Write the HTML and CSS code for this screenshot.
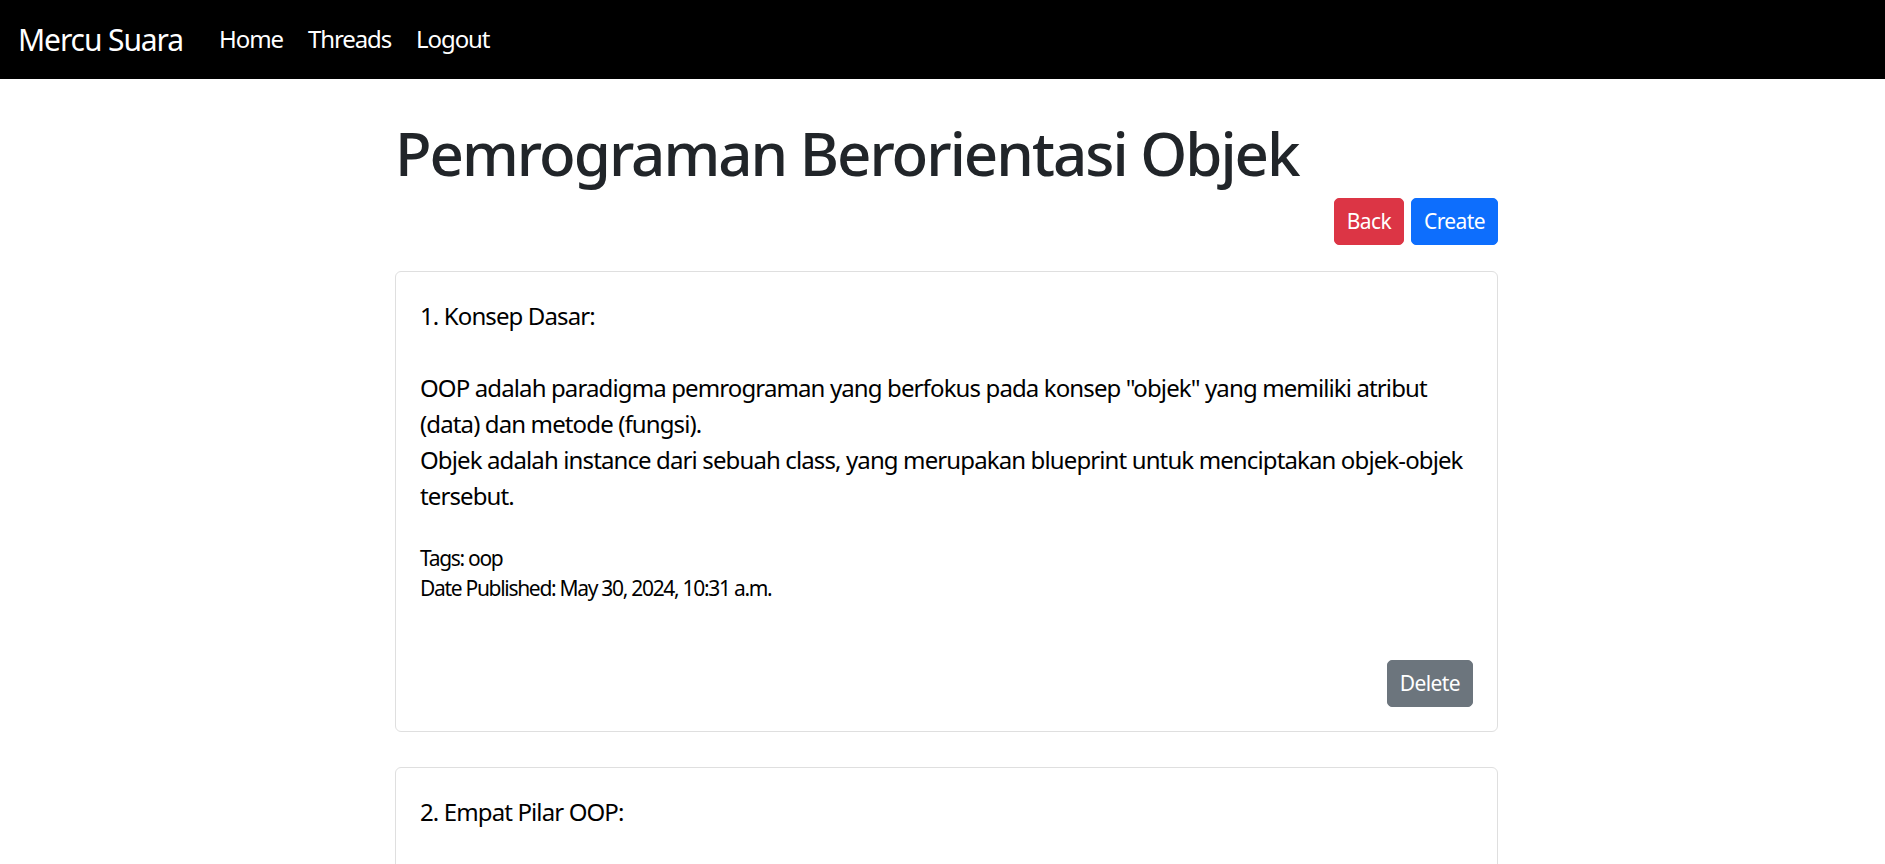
FILE: index.html
```html
<!DOCTYPE html>
<html lang="id">
<head>
<meta charset="utf-8">
<title>Mercu Suara</title>
<link rel="stylesheet" href="styles.css">
</head>
<body>
<nav class="navbar">
  <a class="brand" href="#">Mercu Suara</a>
  <ul class="nav-links">
    <li><a href="#">Home</a></li>
    <li><a href="#">Threads</a></li>
    <li><a href="#">Logout</a></li>
  </ul>
</nav>
<main class="container">
  <h1 class="title">Pemrograman Berorientasi Objek</h1>
  <div class="actions">
    <a class="btn btn-danger" href="#">Back</a>
    <a class="btn btn-primary" href="#">Create</a>
  </div>
  <article class="card">
    <div class="card-body">
      <p class="content">1. Konsep Dasar:<br><br>OOP adalah paradigma pemrograman yang berfokus pada konsep "objek" yang memiliki atribut (data) dan metode (fungsi).<br>Objek adalah instance dari sebuah class, yang merupakan blueprint untuk menciptakan <span class="nowrap">objek-objek</span> tersebut.</p>
      <p class="meta">Tags: oop<br>Date Published: May 30, 2024, 10:31 a.m.</p>
      <div class="card-actions">
        <a class="btn btn-secondary" href="#">Delete</a>
      </div>
    </div>
  </article>
  <article class="card">
    <div class="card-body">
      <p class="content">2. Empat Pilar OOP:<br><br>Enkapsulasi: Menyembunyikan detail implementasi dan hanya menampilkan antarmuka yang diperlukan.</p>
    </div>
  </article>
</main>
</body>
</html>
```
FILE: styles.css
```css
* { box-sizing: border-box; }
html, body { margin: 0; }
body {
  font-family: "Noto Sans", "Open Sans", "Liberation Sans", sans-serif;
  font-size: 24px;
  line-height: 1.5;
  color: #212529;
  background: #fff;
}
a { text-decoration: none; }

.navbar {
  background: #000;
  height: 79px;
  display: flex;
  align-items: center;
  padding: 0 18px;
}
.brand {
  color: #fff;
  font-size: 30px;
  margin-right: 36px;
  letter-spacing: -1.1px;
}
.nav-links {
  display: flex;
  gap: 25px;
  list-style: none;
  margin: 0;
  padding: 0 0 2px 0;
}
.nav-links a {
  color: #fff;
  font-size: 24px;
  letter-spacing: -1.1px;
}

.container {
  width: 1103px;
  margin-left: 395px;
  padding-top: 38px;
}
.title {
  font-size: 60px;
  font-weight: 500;
  line-height: 72px;
  margin: 0 0 9px 0;
  letter-spacing: -2px;
}
.actions {
  display: flex;
  justify-content: flex-end;
  gap: 7px;
  margin-bottom: 26px;
}
.btn {
  display: inline-block;
  font-size: 21px;
  line-height: 33px;
  padding: 6px 12px;
  border: 1px solid transparent;
  border-radius: 5px;
  color: #fff;
  letter-spacing: -0.6px;
}
.btn-danger { background: #dc3545; border-color: #dc3545; }
.btn-primary { background: #0d6efd; border-color: #0d6efd; }
.btn-secondary { background: #6c757d; border-color: #6c757d; }

.card {
  border: 1px solid #dfdfdf;
  border-radius: 6px;
  margin-bottom: 35px;
}
.card-body { padding: 24px; }
.content {
  margin: 0 0 29px 0;
  padding-top: 2px;
  color: #000;
  letter-spacing: -0.88px;
}
.nowrap { white-space: nowrap; }
.meta {
  margin: 0;
  font-size: 21px;
  line-height: 30px;
  color: #000;
  letter-spacing: -1.3px;
}
.card-actions {
  display: flex;
  justify-content: flex-end;
  margin-top: 57px;
}
```
